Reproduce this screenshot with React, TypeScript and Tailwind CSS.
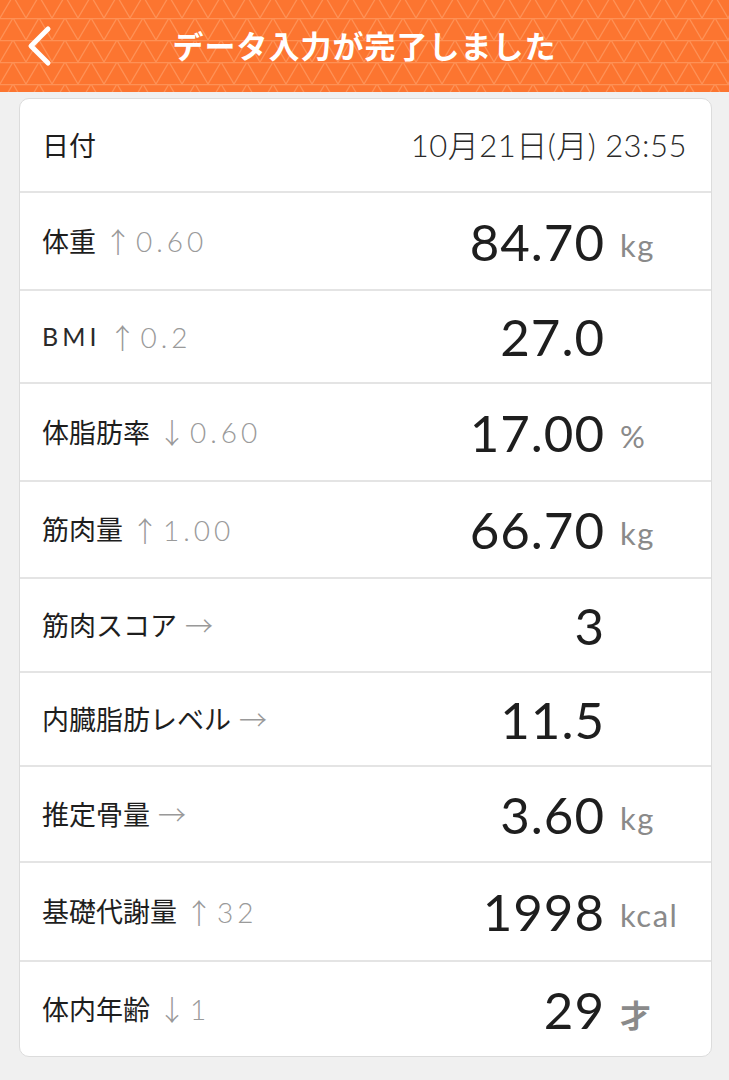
import React from "react";

type Row = {
  label: string;
  arrow?: string;
  delta?: string;
  value: string;
  unit?: string;
  h: string;
  thinLabel?: boolean;
};

const rows: Row[] = [
  { label: "体重", arrow: "↑", delta: "0.60", value: "84.70", unit: "kg", h: "h-[98px]" },
  { label: "BMI", arrow: "↑", delta: "0.2", value: "27.0", h: "h-[93px]", thinLabel: true },
  { label: "体脂肪率", arrow: "↓", delta: "0.60", value: "17.00", unit: "%", h: "h-[98px]" },
  { label: "筋肉量", arrow: "↑", delta: "1.00", value: "66.70", unit: "kg", h: "h-[97px]" },
  { label: "筋肉スコア", arrow: "→", value: "3", h: "h-[94px]" },
  { label: "内臓脂肪レベル", arrow: "→", value: "11.5", h: "h-[94px]" },
  { label: "推定骨量", arrow: "→", value: "3.60", unit: "kg", h: "h-[96px]" },
  { label: "基礎代謝量", arrow: "↑", delta: "32", value: "1998", unit: "kcal", h: "h-[99px]" },
  { label: "体内年齢", arrow: "↓", delta: "1", value: "29", unit: "才", h: "h-[96px]" },
];

const jp = "font-['Noto_Sans_CJK_JP','Noto_Sans',sans-serif]";
const num = "font-['Lato','Noto_Sans_CJK_JP',sans-serif]";

function Header() {
  return (
    <div className="relative h-[92px] bg-[#fc7530] overflow-hidden">
      <svg className="absolute inset-0" width="729" height="92">
        <defs>
          <pattern id="tri" width="26" height="22" patternUnits="userSpaceOnUse" y="-4">
            <path d="M0 22 L13 0 L26 22 M0 0.6 H26" stroke="#ffa36e" strokeOpacity="0.6" strokeWidth="1.3" fill="none" />
          </pattern>
        </defs>
        <rect width="729" height="92" fill="url(#tri)" />
      </svg>
      <div className="relative flex items-center justify-center h-full">
        <svg className="absolute left-[24px] top-[25px]" width="32" height="42" viewBox="0 0 32 42">
          <polyline points="24,4 7,21 24,38" fill="none" stroke="#fff" strokeWidth="5" strokeLinecap="round" strokeLinejoin="round" />
        </svg>
        <h1 className={`${jp} text-white text-[31px] font-bold tracking-[1px] -mt-[2px]`}>
          データ入力が完了しました
        </h1>
      </div>
    </div>
  );
}

export default function App() {
  return (
    <div className="w-[729px] h-[1080px] bg-[#f0f0f0] overflow-hidden">
      <Header />
      <div className="ml-[19px] mr-[17px] mt-[6px] bg-white border border-[#dcdcdc] rounded-[10px] overflow-hidden">
        <div className="h-[92px] flex items-center justify-between pl-[22px] pr-[24px]">
          <span className={`${jp} text-[27px] text-[#1e1e1e]`}>日付</span>
          <span className={`${num} font-light text-[31px] text-[#2a2a2a] tracking-[0.5px]`}>
            10<span className={jp}>月</span>21<span className={jp}>日</span>(<span className={jp}>月</span>) 23:55
          </span>
        </div>
        {rows.map((r) => (
          <div
            key={r.label}
            className={`${r.h} flex items-center border-t-2 border-[#e4e4e4] pl-[22px]`}
          >
            <div className="flex-1 flex items-center">
              {r.thinLabel ? (
                <span className={`${num} text-[25px] text-[#2a2a2a] tracking-[4px]`}>{r.label}</span>
              ) : (
                <span className={`${jp} text-[27px] text-[#1e1e1e]`}>{r.label}</span>
              )}
              <span className={`${jp} font-light text-[28px] text-[#999] ml-[8px]`}>{r.arrow}</span>
              {r.delta && (
                <span className={`${num} font-light text-[28px] text-[#9a9a9a] tracking-[4px] ml-[4px]`}>
                  {r.delta}
                </span>
              )}
            </div>
            <span className={`${num} text-[51px] text-[#1e1e1e] leading-none tracking-[1px]`}>{r.value}</span>
            <span
              className={`w-[106px] pl-[15px] text-[31px] text-[#8a8a8a] leading-none mt-[8px] tracking-[1.5px] ${
                r.unit === "才" ? `${jp} font-bold text-[29px]` : num
              }`}
            >
              {r.unit}
            </span>
          </div>
        ))}
      </div>
    </div>
  );
}
